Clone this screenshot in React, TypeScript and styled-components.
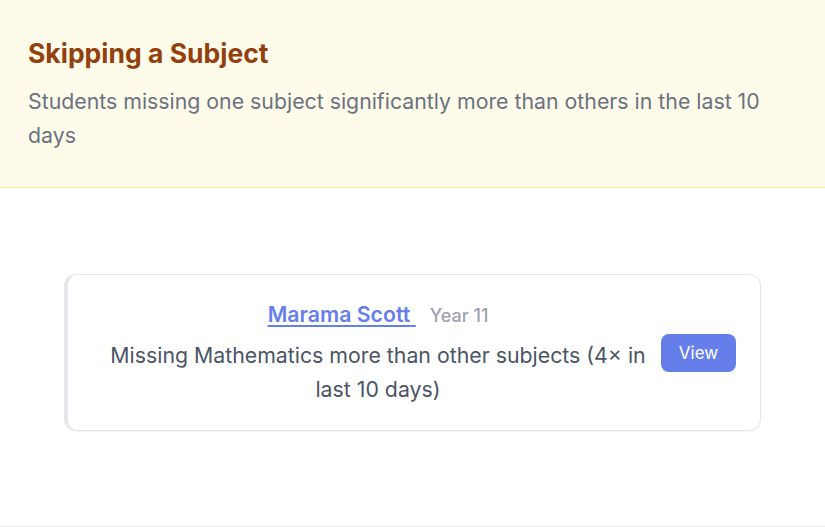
import styled, { createGlobalStyle } from 'styled-components';

const GlobalStyle = createGlobalStyle`
  html, body {
    margin: 0;
    padding: 0;
    background: #ffffff;
  }
  body {
    font-family: Inter, "Noto Sans", sans-serif;
  }
  * {
    box-sizing: border-box;
  }
`;

type Alert = {
  name: string;
  year: string;
  message: string;
};

const alerts: Alert[] = [
  {
    name: 'Marama Scott',
    year: 'Year 11',
    message: 'Missing Mathematics more than other subjects (4× in last 10 days)',
  },
];

const App = () => {
  return (
    <>
      <GlobalStyle />
      <PanelStyle>
        <HeaderStyle>
          <TitleStyle>Skipping a Subject</TitleStyle>
          <SubtitleStyle>
            Students missing one subject significantly more than others in the last 10 days
          </SubtitleStyle>
        </HeaderStyle>
        <ListStyle>
          {alerts.map((item) => (
            <AlertCard key={item.name} {...item} />
          ))}
        </ListStyle>
      </PanelStyle>
    </>
  );
};

const AlertCard = ({ name, year, message }: Alert) => (
  <CardStyle>
    <InfoStyle>
      <NameRowStyle>
        <a className="name" href="#">
          {name}{' '}
        </a>
        <span className="year">{year}</span>
      </NameRowStyle>
      <MessageStyle>{message}</MessageStyle>
    </InfoStyle>
    <ViewButton>View</ViewButton>
  </CardStyle>
);

export default App;

const PanelStyle = styled.div`
  width: 100%;
  height: 527px;
  display: flex;
  flex-direction: column;
  border-bottom: 1px solid #e5e7eb;
`;

const HeaderStyle = styled.div`
  background: #fffbeb;
  border-bottom: 1px solid #fde68a;
  padding: 35px 28px 35px 28px;
`;

const TitleStyle = styled.h2`
  margin: 0;
  font-size: 26.5px;
  line-height: 36px;
  font-weight: 700;
  color: #92400e;
`;

const SubtitleStyle = styled.p`
  margin: 13px 0 0 0;
  font-size: 21.3px;
  line-height: 34px;
  color: #6b7280;
`;

const ListStyle = styled.div`
  flex: 1;
  padding: 86px 64px 0 64px;
`;

const CardStyle = styled.div`
  display: flex;
  align-items: center;
  gap: 10px;
  padding: 25px 24px 24px 37px;
  background: #ffffff;
  border: 1px solid #e5e7eb;
  border-left: 4px solid #e5e7eb;
  border-radius: 12px;
  box-shadow: 0 1px 2px rgba(0, 0, 0, 0.04);
`;

const InfoStyle = styled.div`
  flex: 1;
  text-align: center;
`;

const NameRowStyle = styled.div`
  display: flex;
  justify-content: center;
  align-items: baseline;
  gap: 14px;
  line-height: 28px;

  .name {
    font-size: 21.3px;
    font-weight: 600;
    color: #667eea;
    text-decoration: underline;
    text-underline-offset: 3px;
    white-space: pre;
  }
  .year {
    font-size: 18px;
    font-weight: 500;
    color: #9ca3af;
  }
`;

const MessageStyle = styled.div`
  margin-top: 8px;
  font-size: 21.3px;
  line-height: 34px;
  color: #4b5563;
`;

const ViewButton = styled.button`
  flex-shrink: 0;
  width: 75px;
  height: 38px;
  border: none;
  border-radius: 8px;
  background: #667eea;
  color: #ffffff;
  font-family: inherit;
  font-size: 17px;
  cursor: pointer;
`;
